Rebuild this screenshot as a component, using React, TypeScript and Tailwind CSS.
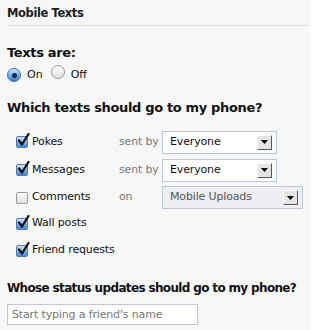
import React from "react"

const font = { fontFamily: '"DejaVu Sans", "Lucida Grande", sans-serif' }

function Radio({ checked }: { checked?: boolean }) {
  return (
    <span
      className={
        "relative inline-flex h-[14px] w-[14px] shrink-0 items-center justify-center rounded-full border " +
        (checked
          ? "border-[#3a6ea5] bg-gradient-to-b from-[#d6ecff] via-[#6fb2f0] to-[#2f7fd6]"
          : "border-[#9a9a9a] bg-gradient-to-b from-[#fdfdfd] to-[#e2e2e2]")
      }
    >
      {checked && <span className="h-[5px] w-[5px] rounded-full bg-[#14243a]" />}
    </span>
  )
}

function Check({ checked }: { checked?: boolean }) {
  return (
    <span className="relative inline-block h-[12px] w-[12px] shrink-0">
      <span
        className={
          "absolute inset-0 rounded-[2px] border " +
          (checked
            ? "border-[#4d79ad] bg-gradient-to-b from-[#cfe6fb] via-[#79b6ec] to-[#3f88d6]"
            : "border-[#9b9b9b] bg-gradient-to-b from-[#ffffff] to-[#e0e0e0]")
        }
      />
      {checked && (
        <svg
          className="absolute left-[1px] top-[-3px]"
          width="13"
          height="14"
          viewBox="0 0 13 14"
        >
          <path
            d="M2 7.5 L5 11.5 L11.5 1"
            fill="none"
            stroke="#0d0d0d"
            strokeWidth="2.2"
            strokeLinecap="round"
            strokeLinejoin="round"
          />
        </svg>
      )}
    </span>
  )
}

function SelectBox({ label, width, disabled }: { label: string; width: string; disabled?: boolean }) {
  return (
    <div
      className={
        "flex h-[23px] items-center justify-between border border-[#bdc7d8] pl-[7px] pr-[4px] text-[11px] " +
        width +
        (disabled ? " bg-[#eeeff3] text-[#555]" : " bg-white text-[#111]")
      }
    >
      <span>{label}</span>
      <span className="flex h-[15px] w-[15px] items-center justify-center border border-b-[#555] border-r-[#555] border-t-white border-l-white bg-[#e4e4e4]">
        <svg width="7" height="4" viewBox="0 0 7 4">
          <path d="M0 0 H7 L3.5 4 Z" fill="#000" />
        </svg>
      </span>
    </div>
  )
}

const rows = [
  { label: "Pokes", checked: true, extra: "sent by", select: "Everyone", h: "h-[28px]" },
  { label: "Messages", checked: true, extra: "sent by", select: "Everyone", h: "h-[28px]" },
  { label: "Comments", checked: false, extra: "on", select: "Mobile Uploads", h: "h-[27px]" },
  { label: "Wall posts", checked: true, h: "h-[25px]" },
  { label: "Friend requests", checked: true, h: "h-[29px]" },
]

export default function App() {
  return (
    <div className="h-[330px] w-[310px] overflow-hidden bg-[#f7f7f7] text-[#111]" style={font}>
      <div className="ml-[7px] flex h-[26px] items-center border-b border-[#d8dfea] pt-[3px]">
        <h2 className="text-[11.5px] font-bold tracking-[-0.4px] text-[#1c1c1c]">Mobile Texts</h2>
      </div>

      <div className="px-[7px]">
        <h3 className="mt-[19px] text-[13px] font-bold leading-[16px] tracking-[-0.35px]">
          Texts are:
        </h3>
        <div className="mt-[5px] flex h-[18px] items-center text-[11px]">
          <Radio checked />
          <span className="ml-[6px]">On</span>
          <span className="ml-[8px]">
            <Radio />
          </span>
          <span className="ml-[6px]">Off</span>
        </div>

        <h3 className="mt-[16px] text-[13px] font-bold leading-[16px] tracking-[-0.35px]">
          Which texts should go to my phone?
        </h3>

        <div className="mt-[12px] pl-[9px]">
          {rows.map((r) => (
            <div
              key={r.label}
              className={"flex items-center text-[11px] tracking-[-0.15px] " + r.h}
            >
              <div className="flex w-[103px] items-center">
                <Check checked={r.checked} />
                <span className="ml-[4px] whitespace-nowrap">{r.label}</span>
              </div>
              {r.extra && <span className="w-[43px] text-[#777]">{r.extra}</span>}
              {r.select && (
                <SelectBox
                  label={r.select}
                  width={r.select === "Everyone" ? "w-[115px]" : "w-[141px]"}
                  disabled={r.select !== "Everyone"}
                />
              )}
            </div>
          ))}
        </div>

        <h3 className="mt-[15px] whitespace-nowrap text-[12px] font-bold leading-[16px] tracking-[-0.65px]">
          Whose status updates should go to my phone?
        </h3>
        <input
          className="mt-[8px] h-[21px] w-[191px] border border-[#bdc7d8] bg-white px-[4px] text-[11px] tracking-[-0.15px] outline-none placeholder:text-[#777]"
          style={font}
          placeholder="Start typing a friend's name"
        />
      </div>
    </div>
  )
}
